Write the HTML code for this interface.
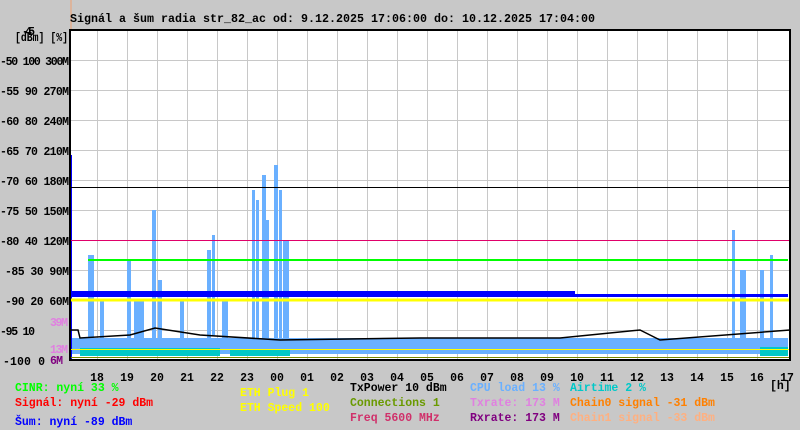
<!DOCTYPE html>
<html><head><meta charset="utf-8"><style>
body{margin:0;background:#c8c8c8;width:800px;height:430px;overflow:hidden}
svg{display:block}
text{font-family:"Liberation Mono",monospace;font-weight:bold;font-size:11.5px}
</style></head><body>
<svg width="800" height="430" xmlns="http://www.w3.org/2000/svg">
<rect width="800" height="430" fill="#c8c8c8"/>
<line x1="71" y1="0" x2="71" y2="30" stroke="#f0a070"/>
<text x="70" y="22" fill="#000" textLength="525" lengthAdjust="spacingAndGlyphs">Signál a šum radia str_82_ac od: 9.12.2025 17:06:00 do: 10.12.2025 17:04:00</text>
<rect x="70" y="30" width="720" height="330" fill="#fff"/>
<g stroke="#c8c8c8" stroke-width="1">
<line x1="97.5" y1="30" x2="97.5" y2="360"/><line x1="127.5" y1="30" x2="127.5" y2="360"/><line x1="157.5" y1="30" x2="157.5" y2="360"/><line x1="187.5" y1="30" x2="187.5" y2="360"/><line x1="217.5" y1="30" x2="217.5" y2="360"/><line x1="247.5" y1="30" x2="247.5" y2="360"/><line x1="277.5" y1="30" x2="277.5" y2="360"/><line x1="307.5" y1="30" x2="307.5" y2="360"/><line x1="337.5" y1="30" x2="337.5" y2="360"/><line x1="367.5" y1="30" x2="367.5" y2="360"/><line x1="397.5" y1="30" x2="397.5" y2="360"/><line x1="427.5" y1="30" x2="427.5" y2="360"/><line x1="457.5" y1="30" x2="457.5" y2="360"/><line x1="487.5" y1="30" x2="487.5" y2="360"/><line x1="517.5" y1="30" x2="517.5" y2="360"/><line x1="547.5" y1="30" x2="547.5" y2="360"/><line x1="577.5" y1="30" x2="577.5" y2="360"/><line x1="607.5" y1="30" x2="607.5" y2="360"/><line x1="637.5" y1="30" x2="637.5" y2="360"/><line x1="667.5" y1="30" x2="667.5" y2="360"/><line x1="697.5" y1="30" x2="697.5" y2="360"/><line x1="727.5" y1="30" x2="727.5" y2="360"/><line x1="757.5" y1="30" x2="757.5" y2="360"/>
<line x1="70" y1="60.5" x2="790" y2="60.5"/><line x1="70" y1="90.5" x2="790" y2="90.5"/><line x1="70" y1="120.5" x2="790" y2="120.5"/><line x1="70" y1="150.5" x2="790" y2="150.5"/><line x1="70" y1="180.5" x2="790" y2="180.5"/><line x1="70" y1="210.5" x2="790" y2="210.5"/><line x1="70" y1="240.5" x2="790" y2="240.5"/><line x1="70" y1="270.5" x2="790" y2="270.5"/><line x1="70" y1="300.5" x2="790" y2="300.5"/><line x1="70" y1="330.5" x2="790" y2="330.5"/>
</g>
<g fill="#6ab0ff">
<rect x="72" y="338" width="716" height="16"/>
<rect x="88" y="255" width="6" height="90"/><rect x="100" y="300" width="4" height="40"/><rect x="127" y="260" width="4" height="80"/><rect x="134" y="300" width="10" height="40"/><rect x="152" y="210" width="4" height="130"/><rect x="158" y="280" width="4" height="60"/><rect x="180" y="300" width="4" height="40"/><rect x="207" y="250" width="4" height="90"/><rect x="212" y="235" width="3" height="100"/><rect x="222" y="300" width="6" height="40"/><rect x="252" y="190" width="3" height="150"/><rect x="256" y="200" width="3" height="140"/><rect x="262" y="175" width="4" height="165"/><rect x="266" y="220" width="3" height="120"/><rect x="274" y="165" width="4" height="175"/><rect x="279" y="190" width="3" height="150"/><rect x="283" y="240" width="6" height="100"/><rect x="732" y="230" width="3" height="110"/><rect x="740" y="270" width="6" height="70"/><rect x="760" y="270" width="4" height="70"/><rect x="770" y="255" width="3" height="85"/>
</g>
<g fill="#00c8c8">
<rect x="80" y="348" width="140" height="8"/><rect x="230" y="350" width="60" height="6"/><rect x="760" y="347" width="28" height="9"/>
</g>
<rect x="70" y="155" width="2" height="205" fill="#0000ff"/>
<path d="M72 291 L575 291 L575 294 L788 294 L788 297 L72 297 Z" fill="#0000ff"/>
<path d="M88 260 L788 260" stroke="#00ff00" stroke-width="2"/>
<line x1="70" y1="187.5" x2="790" y2="187.5" stroke="#000" stroke-width="1"/>
<line x1="70" y1="240.5" x2="790" y2="240.5" stroke="#e0006a" stroke-width="1"/>
<line x1="70" y1="300" x2="790" y2="300" stroke="#ffff00" stroke-width="3"/>
<line x1="70" y1="349.5" x2="790" y2="349.5" stroke="#ffff00" stroke-width="1"/>
<line x1="70" y1="357.5" x2="790" y2="357.5" stroke="#7a8a00" stroke-width="1"/>
<path d="M70 330 L78 330 L80 338 L130 335 L155 328 L200 335 L280 340 L420 338 L560 338 L640 330 L660 340 L790 330" stroke="#000" stroke-width="1.5" fill="none"/>
<rect x="70" y="30" width="720" height="330" fill="none" stroke="#000" stroke-width="2"/>
<g fill="#000" text-anchor="end" lengthAdjust="spacingAndGlyphs">
<text x="69" y="65" textLength="69">-50 100 300M</text><text x="69" y="95" textLength="69">-55 90 270M</text><text x="69" y="125" textLength="69">-60 80 240M</text><text x="69" y="155" textLength="69">-65 70 210M</text><text x="69" y="185" textLength="69">-70 60 180M</text><text x="69" y="215" textLength="69">-75 50 150M</text><text x="69" y="245" textLength="69">-80 40 120M</text><text x="69" y="275" textLength="64">-85 30 90M</text><text x="69" y="305" textLength="64">-90 20 60M</text><text x="35" y="335" textLength="35">-95 10</text><text x="45" y="365" textLength="42">-100 0</text>
</g>
<text x="22" y="35" fill="#000" textLength="13">-45</text>
<text x="15" y="41" fill="#000" textLength="53" lengthAdjust="spacingAndGlyphs">[dBm] [%]</text>
<text x="50" y="326" fill="#e080e0" textLength="18">39M</text>
<text x="50" y="353" fill="#e080e0" textLength="18">13M</text>
<text x="50" y="364" fill="#800080" textLength="13">6M</text>
<g fill="#000" text-anchor="middle">
<text x="97" y="381">18</text><text x="127" y="381">19</text><text x="157" y="381">20</text><text x="187" y="381">21</text><text x="217" y="381">22</text><text x="247" y="381">23</text><text x="277" y="381">00</text><text x="307" y="381">01</text><text x="337" y="381">02</text><text x="367" y="381">03</text><text x="397" y="381">04</text><text x="427" y="381">05</text><text x="457" y="381">06</text><text x="487" y="381">07</text><text x="517" y="381">08</text><text x="547" y="381">09</text><text x="577" y="381">10</text><text x="607" y="381">11</text><text x="637" y="381">12</text><text x="667" y="381">13</text><text x="697" y="381">14</text><text x="727" y="381">15</text><text x="757" y="381">16</text><text x="787" y="381">17</text>
</g>
<text x="770" y="389" fill="#000">[h]</text>
<text x="15" y="391" fill="#00ff00">CINR: nyní 33 %</text>
<text x="15" y="406" fill="#ff0000">Signál: nyní -29 dBm</text>
<text x="15" y="425" fill="#0000ff">Šum: nyní -89 dBm</text>
<text x="240" y="396" fill="#ffff00">ETH Plug 1</text>
<text x="240" y="411" fill="#ffff00">ETH Speed 100</text>
<text x="350" y="391" fill="#000">TxPower 10 dBm</text>
<text x="350" y="406" fill="#6a9a00">Connections 1</text>
<text x="350" y="421" fill="#d0306a">Freq 5600 MHz</text>
<text x="470" y="391" fill="#6ab0ff">CPU load 13 %</text>
<text x="470" y="406" fill="#e080e0">Txrate: 173 M</text>
<text x="470" y="421" fill="#800080">Rxrate: 173 M</text>
<text x="570" y="391" fill="#00c8c8">Airtime 2 %</text>
<text x="570" y="406" fill="#ff8000">Chain0 signal -31 dBm</text>
<text x="570" y="421" fill="#ffb080">Chain1 signal -33 dBm</text>
</svg>
</body></html>
